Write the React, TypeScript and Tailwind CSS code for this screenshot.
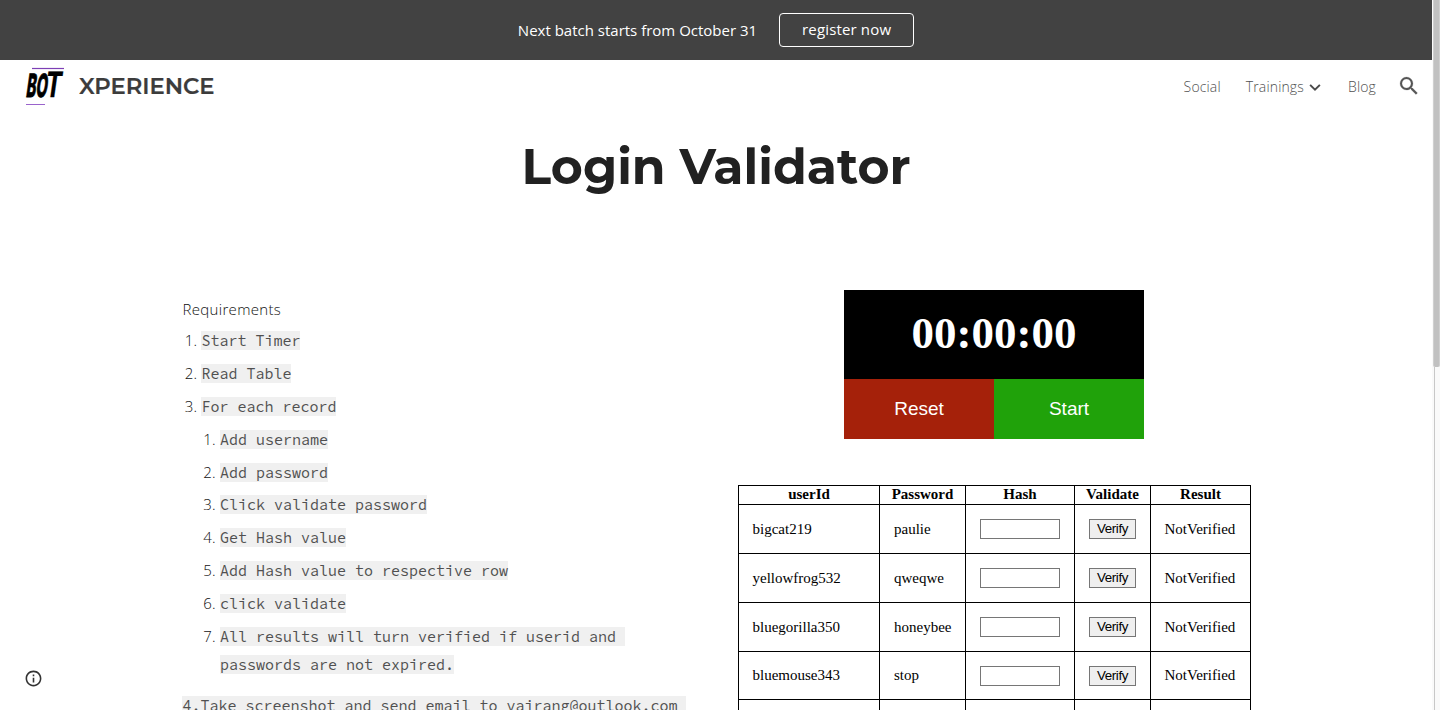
import React from "react";

const steps = ["Start Timer", "Read Table", "For each record"];

const subSteps = [
  "Add username",
  "Add password",
  "Click validate password",
  "Get Hash value",
  "Add Hash value to respective row",
  "click validate",
  "All results will turn verified if userid and\u00a0\npasswords are not expired.",
];

const users = [
  { id: "bigcat219", password: "paulie", height: "h-[49px]" },
  { id: "yellowfrog532", password: "qweqwe", height: "h-[49px]" },
  { id: "bluegorilla350", password: "honeybee", height: "h-[49px]" },
  { id: "bluemouse343", password: "stop", height: "h-[48px]" },
  { id: "", password: "", height: "h-[49px]" },
];

function Code({ children }: { children: React.ReactNode }) {
  return (
    <code className="bg-[#f0f0f0] font-['Source_Code_Pro','Liberation_Mono',monospace] text-[15px] leading-[1px] font-normal tracking-normal whitespace-pre text-[#505050]">
      {children}
    </code>
  );
}

function Logo() {
  return (
    <svg className="h-[40px] w-[40px] overflow-visible" viewBox="0 0 40 40">
      <path d="M7 1.5H39" stroke="#7d3fb5" strokeWidth="1.2" />
      <path d="M1 37.5H20" stroke="#9a63cc" strokeWidth="1" />
      <g transform="translate(0.5 30) skewX(-8)" fontFamily="Inter, sans-serif" fontWeight="800" fill="#000" stroke="#000">
        <text x="0" y="0" fontSize="32" strokeWidth="0.8" textLength="21" lengthAdjust="spacingAndGlyphs">
          BO
        </text>
        <text x="18.5" y="0" fontSize="35" fontWeight="700" strokeWidth="0.3" textLength="16.5" lengthAdjust="spacingAndGlyphs">
          T
        </text>
      </g>
    </svg>
  );
}

function Banner() {
  return (
    <div className="flex h-[60px] shrink-0 items-center justify-center gap-[22px] bg-[#424242] text-[15px] text-white">
      <span className="whitespace-nowrap">Next batch starts from October 31</span>
      <button className="h-[34px] w-[135px] rounded-[4px] border border-white pb-[2px] tracking-[0.15px]">register now</button>
    </div>
  );
}

function Header() {
  return (
    <header className="flex h-[54px] shrink-0 items-center justify-between pr-[11px] pl-[25px]">
      <div className="flex items-center gap-[14px]">
        <Logo />
        <svg className="h-[30px] w-[140px]" viewBox="0 0 140 30">
          <text x="0" y="22.3" fontFamily="Montserrat, Inter, sans-serif" fontWeight="600" fontSize="22" textLength="135.5" lengthAdjust="spacingAndGlyphs" fill="#3c3c3c" stroke="#3c3c3c" strokeWidth="0.2">
            XPERIENCE
          </text>
        </svg>
      </div>
      <nav className="flex items-center pb-[2px] text-[14px] font-light tracking-[0.15px] text-[#505050]">
        <a className="mr-[25px]">Social</a>
        <a className="mr-[2px]">Trainings</a>
        <svg className="mt-px mr-[24px] h-[18px] w-[18px]" viewBox="0 0 24 24">
          <path d="M5.5 9.2 12 15.5l6.500-6.300" fill="none" stroke="#4a4a4a" strokeWidth="2.6" />
        </svg>
        <a className="mr-[21px]">Blog</a>
        <svg className="h-6 w-6" viewBox="0 0 24 24" fill="#555" stroke="#555" strokeWidth=".2">
          <path d="M15.5 14h-.79l-.28-.27A6.471 6.471 0 0 0 16 9.5 6.5 6.5 0 1 0 9.5 16c1.61 0 3.09-.59 4.23-1.57l.27.28v.79l5 4.99L20.49 19l-4.99-5zm-6 0C7.01 14 5 11.99 5 9.5S7.01 5 9.5 5 14 7.01 14 9.5 11.99 14 9.5 14z" />
        </svg>
      </nav>
    </header>
  );
}

function Requirements() {
  return (
    <section className="w-[516px] pt-[5px] text-[15px] leading-[28px] font-light text-[#111]">
      <p className="pl-[0.5px] tracking-[0.32px]">Requirements</p>
      <ol className="pt-[2.8px]">
        {steps.map((step, i) => (
          <li key={step} className="flex h-[33px]">
            <span className="w-[15px] text-right">{i + 1}.</span>
            <span className="pl-[4.4px]"><Code>{step}</Code></span>
          </li>
        ))}
      </ol>
      <ol className="pl-[18.5px]">
        {subSteps.map((step, i) => (
          <li key={step} className="flex pb-[4.85px]">
            <span className="w-[15px] shrink-0 text-right">{i + 1}.</span>
            <span className="w-[420px] pl-[4.4px]"><Code>{step}</Code></span>
          </li>
        ))}
      </ol>
      <p className="pt-[8.5px] pl-[0.4px] whitespace-pre"><Code>{"4.Take screenshot and send email to vajrang@outlook.com "}</Code></p>
    </section>
  );
}

function Timer() {
  return (
    <div className="mr-px w-[300px] text-white">
      <div className="flex h-[89px] items-center justify-center bg-black pb-px font-['Liberation_Serif',serif] text-[45px] font-bold">00:00:00</div>
      <div className="flex h-[60px] font-['Liberation_Sans',sans-serif] text-[19px]">
        <button className="flex-1 bg-[#a5210a]">Reset</button>
        <button className="flex-1 bg-[#20a20a]">Start</button>
      </div>
    </div>
  );
}

function UserTable() {
  return (
    <table className="w-[513px] table-fixed border-collapse font-['Liberation_Serif',serif] text-[15px] leading-[17px] text-black">
      <colgroup>
        <col className="w-[141px]" />
        <col className="w-[86px]" />
        <col className="w-[109px]" />
        <col className="w-[76px]" />
        <col className="w-[100px]" />
      </colgroup>
      <thead>
        <tr className="h-[19px]">
          {["userId", "Password", "Hash", "Validate", "Result"].map((h) => (
            <th key={h} className="border border-black p-0 pb-[2px] leading-[15px]">{h}</th>
          ))}
        </tr>
      </thead>
      <tbody>
        {users.map((u) => (
          <tr key={u.id} className={u.height}>
            <td className="border border-black py-0 pr-0 pl-[13.5px]">{u.id}</td>
            <td className="border border-black py-0 pr-0 pl-[14px]">{u.password}</td>
            <td className="border border-black py-0 pr-0 pl-[14px]">
              {u.id && <input className="block h-[20px] w-[80px] border border-[#767676] bg-white" />}
            </td>
            <td className="border border-black py-0 pr-0 pl-[14px]">
              {u.id && (
                <button className="block h-[20px] w-[47px] border border-[#767676] bg-[#efefef] pb-px font-['Liberation_Sans',sans-serif] text-[13.33px] leading-[17px] tracking-[-0.35px]">Verify</button>
              )}
            </td>
            <td className="border border-black py-0 pr-0 pl-[13.5px]">{u.id && "NotVerified"}</td>
          </tr>
        ))}
      </tbody>
    </table>
  );
}

export default function App() {
  return (
    <div className="relative flex h-[710px] w-[1440px] overflow-hidden bg-white font-['Open_Sans',sans-serif]">
      <div className="flex w-[1432px] shrink-0 flex-col">
        <Banner />
        <Header />
        <div className="flex h-[176px] shrink-0 justify-center">
          <svg className="mt-[14px] h-[80px] w-[400px]" viewBox="0 0 400 80">
            <text x="5.5" y="56" fontFamily="Montserrat, Inter, sans-serif" fontWeight="700" fontSize="49.5" textLength="389" lengthAdjust="spacingAndGlyphs" fill="#212121">
              Login Validator
            </text>
          </svg>
        </div>
        <main className="flex shrink-0 gap-[40px] pl-[182px]">
          <Requirements />
          <div className="flex w-[513px] flex-col items-center gap-[46px]">
            <Timer />
            <UserTable />
          </div>
        </main>
      </div>
      <div className="h-[710px] w-[8px] bg-[#fafafa] pl-px">
        <div className="h-[367px] w-[7px] rounded-b-[2px] border-x border-[#d0d0d0] bg-[#c1c1c1]" />
        <div className="ml-px h-[343px] border-l border-[#c8c8c8]" />
      </div>
      <svg className="absolute top-[669px] left-[24px] h-[19px] w-[19px]" viewBox="0 0 24 24" fill="#333">
        <path d="M11 7h2v2h-2zm0 4h2v6h-2zm1-9C6.48 2 2 6.48 2 12s4.48 10 10 10 10-4.48 10-10S17.52 2 12 2zm0 18c-4.41 0-8-3.59-8-8s3.59-8 8-8 8 3.59 8 8-3.59 8-8 8z" />
      </svg>
    </div>
  );
}
